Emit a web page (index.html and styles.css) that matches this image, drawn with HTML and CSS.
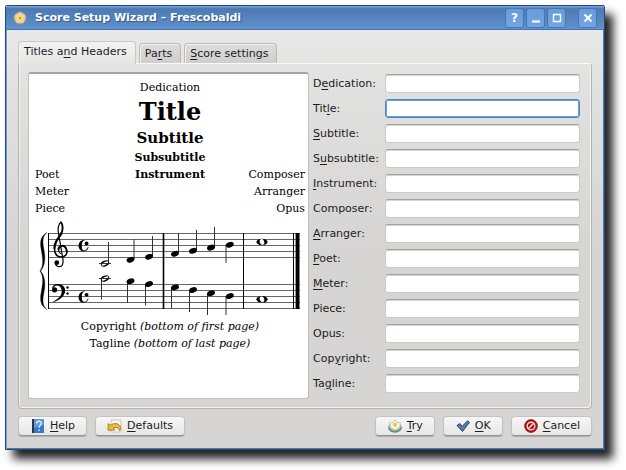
FILE: index.html
```html
<!DOCTYPE html>
<html lang="en">
<head>
<meta charset="utf-8">
<title>Score Setup Wizard – Frescobaldi</title>
<link rel="stylesheet" href="styles.css">
</head>
<body>
<main class="window">
  <header class="titlebar">
    <svg class="logo" viewBox="0 0 14 14" aria-hidden="true"><circle cx="7" cy="7" r="6.8" fill="#6f9f78"/><circle cx="7" cy="7" r="5.6" fill="#f0b8a4"/><g fill="#f5cbb4"><circle cx="7" cy="3.6" r="2.3"/><circle cx="10.2" cy="5.9" r="2.3"/><circle cx="9" cy="9.8" r="2.3"/><circle cx="5" cy="9.8" r="2.3"/><circle cx="3.8" cy="5.9" r="2.3"/></g><circle cx="7" cy="7" r="2.8" fill="#f4e052"/><circle cx="7" cy="7" r="1" fill="#8a8d60"/></svg>
    <h1>Score Setup Wizard – Frescobaldi</h1>
    <div class="controls">
      <button type="button" aria-label="What's this">?</button>
      <button type="button" aria-label="Minimize"><svg viewBox="0 0 10 10"><path d="M1 8.5h8" stroke="#fff" stroke-width="2"/></svg></button>
      <button type="button" aria-label="Maximize"><svg viewBox="0 0 10 10"><path d="M1.5 1.5h7v7h-7z" fill="none" stroke="#fff" stroke-width="1.4"/></svg></button>
      <button type="button" class="close" aria-label="Close"><svg viewBox="0 0 10 10"><path d="M1.5 1.5l7 7m0-7l-7 7" stroke="#fff" stroke-width="2"/></svg></button>
    </div>
  </header>

  <nav class="tabs" role="tablist">
    <button type="button" role="tab" class="tab active" aria-selected="true">Titles a<u>n</u>d Headers</button>
    <button type="button" role="tab" class="tab">Pa<u>r</u>ts</button>
    <button type="button" role="tab" class="tab"><u>S</u>core settings</button>
  </nav>

  <section class="panel">
    <article class="preview">
      <p>Dedication</p>
      <p class="title">Title</p>
      <p class="subtitle">Subtitle</p>
      <p class="subsubtitle">Subsubtitle</p>
      <div class="credits">
        <span>Poet</span><b>Instrument</b><span>Composer</span>
        <span>Meter</span><span></span><span>Arranger</span>
        <span>Piece</span><span></span><span>Opus</span>
      </div>
      <svg class="score" viewBox="35 218 270 100" role="img" aria-label="Two-staff score example">
        <defs>
          <ellipse id="q" rx="4.1" ry="2.7" transform="rotate(-20)"/>
          <g id="w"><ellipse rx="5.6" ry="3.3"/><ellipse rx="2.2" ry="2.9" fill="#fff" transform="rotate(-20)"/></g>
          <g id="h"><ellipse rx="4.4" ry="2.8" transform="rotate(-20)"/><ellipse rx="3.6" ry="1.3" fill="#fff" transform="rotate(-28)"/><path d="M-6 0H6" stroke="#222" stroke-width=".9"/></g>
          <g id="c"><path d="M4-2C3-5.2-.4-6.2-2.6-4.9C-6.4-2.6-6.4 3.6-2.4 5.5C.6 6.8 3.9 4.8 4.6 1.8L3.9 1.6C2.8 4.5.6 5.6-.8 4.8C-2.7 3.4-2.7-3.2-.8-4.6C.6-5.4 2.2-5 3-3.8Z"/><circle cx="2.6" cy="-2" r="1.9"/></g>
        </defs>
        <path class="staff" d="M48 233.5H300M48 239.5H300M48 245.5H300M48 251.5H300M48 257.5H300M48 284.5H300M48 290.5H300M48 296.5H300M48 302.5H300M48 308.5H300"/>
        <path d="M48.5 233V309M243.5 233V309M293.5 233V309" stroke="#000"/>
        <path d="M163.5 233V309" stroke="#000" stroke-width="1.6"/>
        <path d="M295.6 233h3.9v76h-3.9z"/>
        <path d="M46.8 232.8C42 236 42.5 243 44 250C45.6 258 45 266 40.6 271C45 276 45.6 284 44 292C42.5 299 42 306 46.8 309.3C38.8 305 40.3 297 41.8 289C43.2 281 43.3 276 40 271C43.3 266 43.2 261 41.8 253C40.3 245 38.8 237 46.8 232.8Z" stroke="#000" stroke-width=".4"/>
        <g fill="none" stroke="#000" stroke-linecap="round">
          <path d="M61 222.3C58.8 223.5 57.7 228 58.3 232L62.8 258.5C63.7 264 62 266.7 59.4 266.7C57.4 266.7 55.5 265.2 55.3 262.8" stroke-width="1.2"/>
          <path d="M61 222.3C63.2 224.5 63 230.5 61.3 233.5" stroke-width="1.9"/>
          <path d="M61.3 233.5C59 238 54.6 241 54.5 248" stroke-width="2.3"/>
          <path d="M54.5 248C54.5 253.5 57 257 61.3 257C65.3 257 67 254.5 66.9 251.4" stroke-width="1.5"/>
          <path d="M66.9 251.4C66.7 247.3 64 245.5 61.7 245.9C59.6 246.2 58.5 247.9 58.5 249.5" stroke-width="2"/>
          <path d="M58.5 249.5C58.4 251.3 59.3 252.7 60.7 253.4" stroke-width="1.1"/>
        </g>
        <circle cx="56.8" cy="262.7" r="2.4"/>
        <path d="M52.3 302.2C60.5 298 62.2 294.2 61.6 289.8C60.8 285.3 55.5 284 53.6 287.6L52 288.5C52.4 284.6 57 282.8 61 284.6C66.2 287 66.4 292.6 62.8 296.4C60.2 299.3 56.4 301.4 52.3 302.2Z"/>
        <circle cx="54.6" cy="289.8" r="2.6"/>
        <circle cx="67.5" cy="287.5" r="1.2"/><circle cx="67.5" cy="293.5" r="1.2"/>
        <use href="#c" x="84" y="245.5"/><use href="#c" x="84" y="296.8"/>
        <path class="stem" d="M108.5 263V242M134 259V239M152.5 256V236M178.5 253V233M196.5 250V230M214.5 247V227M226 245V263M101.5 279V299.5M127.5 282V303M145.5 285V305.5M171.5 288V308.5M189.5 291V312M207.5 294V315M226 296V315"/>
        <use href="#h" x="105" y="263.5"/><use href="#q" x="130.5" y="259.7"/><use href="#q" x="149" y="256.7"/><use href="#q" x="175" y="253.7"/><use href="#q" x="193" y="250.8"/><use href="#q" x="211" y="247.6"/><use href="#q" x="229.8" y="244.7"/><use href="#w" x="262" y="242"/>
        <use href="#h" x="105" y="278.5"/><use href="#q" x="130.5" y="281.2"/><use href="#q" x="149" y="284"/><use href="#q" x="175" y="287.3"/><use href="#q" x="193" y="290"/><use href="#q" x="211" y="293.2"/><use href="#q" x="229.8" y="296"/><use href="#w" x="262" y="299.3"/>
      </svg>
      <p>Copyright <i>(bottom of first page)</i></p>
      <p>Tagline <i>(bottom of last page)</i></p>
    </article>

    <form class="fields">
      <label for="dedication">D<u>e</u>dication:</label><input id="dedication" type="text">
      <label for="title">Tit<u>l</u>e:</label><input id="title" class="focused" type="text">
      <label for="subtitle"><u>S</u>ubtitle:</label><input id="subtitle" type="text">
      <label for="subsubtitle">S<u>u</u>bsubtitle:</label><input id="subsubtitle" type="text">
      <label for="instrument"><u>I</u>nstrument:</label><input id="instrument" type="text">
      <label for="composer">Composer:</label><input id="composer" type="text">
      <label for="arranger"><u>A</u>rranger:</label><input id="arranger" type="text">
      <label for="poet"><u>P</u>oet:</label><input id="poet" type="text">
      <label for="meter"><u>M</u>eter:</label><input id="meter" type="text">
      <label for="piece">Piece:</label><input id="piece" type="text">
      <label for="opus">Opus:</label><input id="opus" type="text">
      <label for="copyright">Cop<u>y</u>right:</label><input id="copyright" type="text">
      <label for="tagline">Ta<u>g</u>line:</label><input id="tagline" type="text">
    </form>
  </section>

  <footer class="actions">
    <button type="button" class="action"><svg viewBox="0 0 16 16"><path d="M2 1h2v14H2z" fill="#263747"/><path d="M4 1h10v14H4z" fill="#3977c8"/><path d="M4 1h10v6L4 10z" fill="#5b9ae2"/><path d="M6.5 5.5C6.5 2.4 11.5 2.6 11.3 5.5C11.1 7.3 9 7.5 9 9.8M9 11.5v1.6" fill="none" stroke="#e4f0fd" stroke-width="1.4"/></svg><span><u>H</u>elp</span></button>
    <button type="button" class="action"><svg viewBox="0 0 16 16"><path d="M4 2h10v12H4z" fill="#f6f6f6" stroke="#b9b9b9" stroke-width=".8"/><path d="M1.2 5.5L1 12.3 8 12 6 10.2C8.5 8.6 11.6 9.6 12.6 12.8C16.2 8 9.6 2.6 3.2 7.4Z" fill="#edb937" stroke="#a06a15" stroke-width=".8"/></svg><span><u>D</u>efaults</span></button>
    <span class="spacer"></span>
    <button type="button" class="action"><svg viewBox="0 0 16 16"><ellipse cx="8" cy="9.8" rx="6.8" ry="5" fill="#5f8f70"/><ellipse cx="8" cy="8.6" rx="5.8" ry="4.2" fill="#b4c8b8"/><path d="M2.5 4.5l3.2.4L8 1.8l2.3 3.1 3.2-.4-1 5L8 12 3.5 9.5z" fill="#f4f5f0" stroke="#a9b3a8" stroke-width=".6"/><circle cx="8" cy="6.8" r="2.1" fill="#f5cc1d"/></svg><span><u>T</u>ry</span></button>
    <button type="button" class="action"><svg viewBox="0 0 16 16"><path d="M2 7.5l2.8-2 2.4 2.8L12.6 2.8l1.8 1.7L7.5 13.5z" fill="#5a7ba4" stroke="#2b4566" stroke-linejoin="round"/></svg><span><u>O</u>K</span></button>
    <button type="button" class="action"><svg viewBox="0 0 16 16"><circle cx="8" cy="8" r="6.4" fill="#b80d0d" stroke="#870808" stroke-width=".7"/><circle cx="8" cy="8" r="3.8" fill="none" stroke="#f1dada" stroke-width="1.4"/><path d="M5.3 10.7l5.4-5.4" stroke="#f1dada" stroke-width="1.6"/></svg><span><u>C</u>ancel</span></button>
  </footer>
</main>
</body>
</html>
```
FILE: styles.css
```css
* { box-sizing: border-box; }

body {
  margin: 0;
  padding: 5px 21px 20px 5px;
  background: #fff;
  color: #1c1c1c;
  font: 11px/14px "DejaVu Sans", sans-serif;
}

button, input { font: inherit; color: inherit; }
button { padding: 0; }
h1, p { margin: 0; }
u { text-underline-offset: 2px; text-decoration-thickness: 1px; }
svg { display: block; }

.window {
  border: 1px solid #254a78;
  border-radius: 2px 2px 0 0;
  background: linear-gradient(#ececec, #e0e0df 20%, #d6d5d4 55%);
  box-shadow: inset 1px 0 #6f9fda, inset -1px -1px #4779b3, 8px 9px 10px #222;
}

.titlebar {
  display: flex;
  align-items: center;
  gap: 8px;
  height: 24px;
  padding: 0 7px;
  border-bottom: 1px solid #4474af;
  background: linear-gradient(#7eaae0, #4c79b2 12%, #6092ce);
  color: #fff;
}
.logo { width: 14px; height: 14px; }
h1 {
  flex: 1;
  font-size: 11px;
  font-weight: bold;
  text-shadow: 1px 1px 1px #2d5486;
}
.controls { display: flex; gap: 2px; padding-top: 1px; }
.controls button {
  display: grid;
  place-items: center;
  width: 19px;
  height: 20px;
  border: 1px solid #4876b0;
  border-radius: 3px;
  background: linear-gradient(#679bdc, #73a5e2);
  color: #fff;
  font-size: 12px;
  font-weight: bold;
}
.controls button:first-child { margin-left: 2px; }
.controls svg { width: 10px; height: 10px; }
.controls .close { margin-left: 10px; }

.tabs {
  display: flex;
  align-items: flex-end;
  gap: 3px;
  padding: 11px 12px 0;
}
.tab {
  height: 20px;
  padding: 0 8px 0 5px;
  border: 1px solid #bcbbba;
  border-bottom: 0;
  border-radius: 4px 4px 0 0;
  background: linear-gradient(#dedddc, #cfcecd);
  box-shadow: inset 1px 1px #f3f3f3;
}
.tab.active {
  position: relative;
  height: 23px;
  margin-bottom: -1px;
  padding-bottom: 2px;
  border-color: #c9c9c9;
  background: linear-gradient(#f3f3f3, #e5e5e4);
}

.panel {
  display: grid;
  grid-template-columns: 281fr 267fr;
  gap: 4px;
  margin: 0 12px;
  padding: 8px 11px 9px 9px;
  border: 1px solid #b4b3b2;
  border-top-color: #fafafa;
  border-radius: 0 4px 4px 4px;
  box-shadow: inset 1px 0 #efefef, inset -1px -1px #f3f3f3;
}

.preview {
  padding: 5px 3px 7px 6px;
  border: 1px solid #c0bfbe;
  border-top: 2px solid #a4a4a4;
  border-radius: 3px;
  background: #fff;
  color: #000;
  font: 11px/17px "DejaVu Serif", serif;
  text-align: center;
}
.title { font-size: 24px; line-height: 32px; font-weight: bold; }
.subtitle { font-size: 15px; line-height: 21px; font-weight: bold; }
.subsubtitle { font-weight: bold; }
.credits {
  display: grid;
  grid-template-columns: 1fr auto 1fr;
  grid-auto-rows: 17px;
}
.credits span:nth-child(3n+1) { text-align: left; }
.credits span:nth-child(3n) { text-align: right; }
.score { width: 100%; height: auto; margin-top: 1px; }
.staff { stroke: #666; stroke-width: 1; }
.stem { stroke: #333; stroke-width: 1; }

.fields {
  display: grid;
  grid-template-columns: 72px 1fr;
  grid-auto-rows: 19px;
  row-gap: 6px;
  align-content: start;
  align-items: center;
  padding: 2px 0 6px;
}
.fields input {
  width: 100%;
  height: 19px;
  padding: 0 4px;
  border: 1px solid #cbcac9;
  border-top-color: #a2a2a1;
  border-radius: 3px;
  outline: 0;
  background: #fff;
  box-shadow: inset 0 1px #d4d4d4;
}
.fields .focused {
  border-color: #4c84c8;
  box-shadow: inset 0 0 0 1px #6f9fda;
}

.actions {
  display: flex;
  gap: 8px;
  padding: 7px 12px 13px;
}
.action {
  display: flex;
  align-items: center;
  gap: 4px;
  height: 20px;
  padding: 0 11px;
  border: 1px solid #c4c3c2;
  border-bottom-color: #959493;
  border-radius: 4px;
  background: linear-gradient(#f7f7f7, #e6e6e5);
  box-shadow: 0 1px 1px #aaa;
}
.action svg { width: 16px; height: 16px; }
.spacer { flex: 1; }
```
